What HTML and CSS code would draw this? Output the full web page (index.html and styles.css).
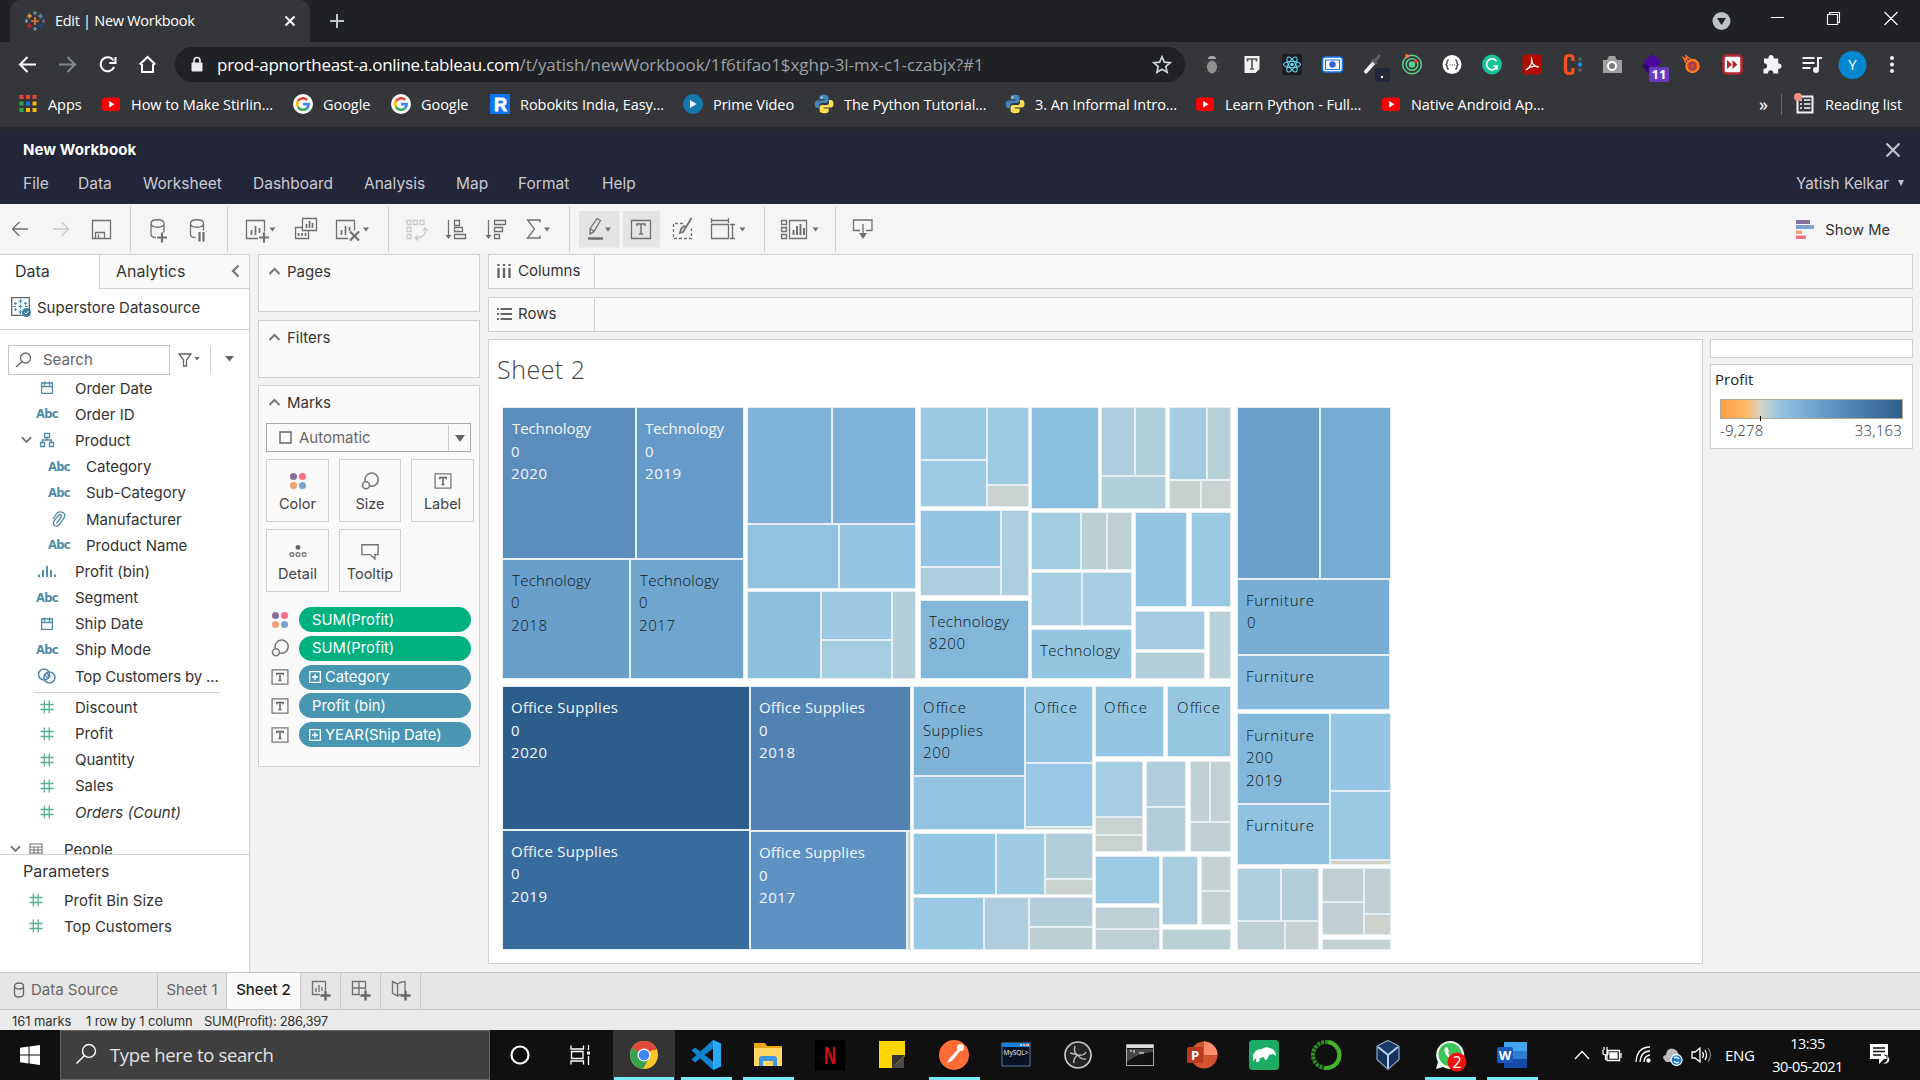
FILE: index.html
```html
<!DOCTYPE html>
<html lang="en">
<head>
<meta charset="utf-8">
<title>Edit | New Workbook</title>
<link rel="stylesheet" href="styles.css">
</head>
<body>
<svg class="defs" width="0" height="0">
  <symbol id="youtube" viewBox="0 0 20 20"><rect x="1" y="3.5" width="18" height="13.5" rx="3" fill="#f00"/><path d="M8 7l5.500 3.200L8 13.400z" fill="#fff"/></symbol>
  <symbol id="google" viewBox="0 0 20 20"><circle cx="10" cy="10" r="10" fill="#fff"/><g fill="none" stroke-width="2.600"><path d="M14.200 5.900A5.800 5.800 0 0 0 5 7.200" stroke="#ea4335"/><path d="M5 7.200a5.800 5.800 0 0 0 0 5.600" stroke="#fbbc05"/><path d="M5 12.800a5.800 5.800 0 0 0 8.800 1.600" stroke="#34a853"/><path d="M13.800 14.400A5.600 5.600 0 0 0 15.700 10.100H10" stroke="#4285f4"/></g></symbol>
  <symbol id="python" viewBox="0 0 20 20"><path d="M10 .8c-3.500 0-4.500 1-4.500 2.800v2h5v.9H3.400C1.600 6.500.7 8 .7 10.200s1 3.700 2.700 3.700h1.800v-2.300c0-1.700 1.200-2.700 2.900-2.700h4.200c1.400 0 2.300-1 2.300-2.300v-3C14.600 1.800 13 .8 10 .8z" fill="#4584b6"/><path d="M10.200 19.200c3.500 0 4.500-1 4.500-2.800v-2h-5v-.9h7.100c1.800 0 2.700-1.500 2.700-3.700s-1-3.700-2.700-3.700H15v2.300c0 1.700-1.200 2.700-2.900 2.700H7.900c-1.400 0-2.300 1-2.300 2.300v3c0 1.800 1.600 2.800 4.600 2.800z" fill="#ffde57"/><circle cx="7.600" cy="3.300" r=".9" fill="#fff"/></symbol>
  <symbol id="calendar" viewBox="0 0 20 16"><path d="M4.600 3h10.800v10.400H4.600zM4.600 6.500h10.800M7.500 1.500v4M12.500 1.500v4" fill="none" stroke="#4e8ba9" stroke-width="1.300"/></symbol>
  <symbol id="hash" viewBox="0 0 20 16"><path d="M7.300 1.500v13M12.200 1.500v13M3.500 5.500h13M3.500 10.500h13" fill="none" stroke="#55b08d" stroke-width="1.300"/></symbol>
  <symbol id="dots4" viewBox="0 0 20 20"><circle cx="5" cy="5" r="4" fill="#86709a"/><circle cx="15" cy="5" r="4" fill="#f76f82"/><circle cx="5" cy="15" r="4" fill="#f0a277"/><circle cx="15" cy="15" r="4" fill="#7ea2cb"/></symbol>
  <symbol id="sizeicon" viewBox="0 0 20 20"><g fill="none" stroke="#757575" stroke-width="1.700"><path d="M4.800 10.500A7.300 7.300 0 1 1 9.500 15.400"/><circle cx="5.500" cy="14.800" r="3.900"/></g></symbol>
  <symbol id="tbox" viewBox="0 0 20 20"><path d="M1.200 2.200h17.600v15.600H1.200z" fill="none" stroke="#757575" stroke-width="1.400"/><path d="M6.500 8V6.200h7V8M10 6.200v7.600M8.300 13.800h3.400" fill="none" stroke="#666" stroke-width="1.700"/></symbol>
  <symbol id="plusbox" viewBox="0 0 12 12"><path d="M.7.7h10.600v10.600H.7zM3 6h6M6 3v6" fill="none" stroke="#fff" stroke-width="1.300"/></symbol>
  <symbol id="up" viewBox="0 0 12 8"><path d="M1 7l5-5 5 5" fill="none" stroke="#757575" stroke-width="2"/></symbol>
  <symbol id="down" viewBox="0 0 12 8"><path d="M1 1l5 5 5-5" fill="none" stroke="#757575" stroke-width="2"/></symbol>
</svg>

<header class="chrome">
  <div class="tabstrip">
    <div class="tab">
      <svg width="20" height="20" viewBox="0 0 20 20" fill="none" stroke-width="1.700"><path d="M10 6v8M6 10h8" stroke="#e8762c"/><path d="M10 0v4M8 2h4M10 16v4M8 18h4" stroke="#5b879b"/><path d="M4.500 2.500v5M2 5h5" stroke="#eb912c"/><path d="M15.500 2.500v5M13 5h5" stroke="#59879b"/><path d="M4.500 12.500v5M2 15h5" stroke="#c72035"/><path d="M15.500 12.500v5M13 15h5" stroke="#1f447e"/><path d="M1.500 8v4M0 10h3" stroke="#7199a6"/><path d="M18.500 8v4M17 10h3" stroke="#5c6692"/></svg>
      <span class="tabtitle">Edit | New Workbook</span>
      <svg width="12" height="12" viewBox="0 0 12 12"><path d="M1.500 1.500l9 9M10.500 1.500l-9 9" stroke="#fff" stroke-width="2"/></svg>
    </div>
    <svg class="newtab" width="16" height="16" viewBox="0 0 16 16"><path d="M8 1v14M1 8h14" stroke="#c4c7ca" stroke-width="2"/></svg>
    <svg class="winbtns" width="210" height="42" viewBox="1710 0 210 42"><circle cx="1721.500" cy="21" r="9" fill="#bdc1c6"/><path d="M1717 18h9l-4.500 7z" fill="#202124"/><path d="M1771 17.500h13M1827.500 14.500h10v10h-10zM1829.500 14.500v-2h10v10h-2M1884.500 12l13 13M1897.500 12l-13 13" fill="none" stroke="#fff" stroke-width="1.100"/></svg>
  </div>
  <div class="navbar">
    <svg class="navicons" width="175" height="45" viewBox="0 42 175 45" fill="none" stroke="#fff" stroke-width="2"><path d="M36 64.500H21M27.500 57l-7.500 7.500 7.500 7.500"/><path d="M59 64.500h15M67.500 57l7.500 7.500-7.500 7.500" stroke="#84878a"/><path d="M113.500 60.500a7 7 0 1 0 .6 6.500M115.500 57v6h-6.200"/><path d="M139.700 64.500l7.800-7.500 7.800 7.500M142 64v8h11v-8"/></svg>
    <div class="omnibox">
      <svg width="14" height="18" viewBox="0 0 14 18"><rect x="1.500" y="6.500" width="11" height="9" rx="1" fill="#e8eaed"/><path d="M4 7V4.500a3 3 0 0 1 6 0V7" fill="none" stroke="#e8eaed" stroke-width="1.600"/></svg>
      <span class="url">prod-apnortheast-a.online.tableau.com<i>/t/yatish/newWorkbook/1f6tifao1$xghp-3l-mx-c1-czabjx?#1</i></span>
      <svg class="star" width="20" height="20" viewBox="0 0 20 20"><path d="M10 1.800l2.400 5.400 5.800.5-4.400 3.900 1.300 5.700-5.100-3-5.100 3 1.300-5.700L1.800 7.700l5.800-.5z" fill="none" stroke="#d0d3d6" stroke-width="1.700"/></svg>
    </div>
    <div class="exts">
      <svg viewBox="0 0 40 45"><ellipse cx="20" cy="25" rx="5" ry="6.500" fill="#909090"/><path d="M16 17a4 3 0 0 1 8 0z" fill="#aaa"/><path d="M13 20l2 1M27 20l-2 1M12.500 25h2M27.500 25h-2M13 30l2-1M27 30l-2-1" stroke="#5d5d5d"/></svg>
      <svg viewBox="0 0 40 45"><path d="M12.500 14h15v13l-4 4h-11z" fill="#f1f1f1"/><path d="M15.500 19.500V17h9v2.500M20 17v10M18 27h4" fill="none" stroke="#555" stroke-width="1.700"/></svg>
      <svg viewBox="0 0 40 45"><rect x="10" y="12" width="20" height="21" rx="2" fill="#1d1e20"/><g fill="none" stroke="#61dafb" stroke-width="1.100"><ellipse cx="20" cy="22.500" rx="8.500" ry="3.300"/><ellipse cx="20" cy="22.500" rx="8.500" ry="3.300" transform="rotate(60 20 22.500)"/><ellipse cx="20" cy="22.500" rx="8.500" ry="3.300" transform="rotate(120 20 22.500)"/></g><circle cx="20" cy="22.500" r="1.800" fill="#61dafb"/></svg>
      <svg viewBox="0 0 40 45"><rect x="10.500" y="15" width="20" height="15" rx="3" fill="#fff" stroke="#1a73e8" stroke-width="1.500"/><path d="M13.500 18h14v9.500h-14z" fill="none" stroke="#1a73e8" stroke-width="1.200"/><circle cx="20.500" cy="22.500" r="3.200" fill="#3d5bd9"/></svg>
      <svg viewBox="0 0 40 45"><path d="M14 29.500l8-9" stroke="#eee" stroke-width="3.800" stroke-linecap="round"/><path d="M22 20l6-7M20 17l5 5" stroke="#5c5c5c" stroke-width="3"/><rect x="23" y="26" width="15" height="14" rx="2" fill="#23273b"/><circle cx="30" cy="35" r="1.200" fill="#fff"/></svg>
      <svg viewBox="0 0 40 45"><g fill="none" stroke="#57d18d" stroke-width="1.500"><circle cx="20" cy="22.500" r="9.300"/><circle cx="20" cy="22.500" r="5.800"/></g><circle cx="20" cy="22.500" r="3.200" fill="#57d18d"/><circle cx="15" cy="14" r="2" fill="#ff6d3a"/><circle cx="24" cy="19" r="1.800" fill="#f33"/></svg>
      <svg viewBox="0 0 40 45"><circle cx="20" cy="22.500" r="9.500" fill="#fff"/><path d="M17 18q-2 0-2 2v1.500l-1 1 1 1V25q0 2 2 2M23 18q2 0 2 2v1.500l1 1-1 1V25q0 2-2 2M17.500 23h1M20 23h1M22 23h1" fill="none" stroke="#333" stroke-width="1.200"/></svg>
      <svg viewBox="0 0 40 45"><circle cx="20" cy="22.500" r="10" fill="#15c39a"/><path d="M24.500 19a5.500 5.500 0 1 0 .8 5h-4M25 27.500v-4" fill="none" stroke="#fff" stroke-width="1.700"/></svg>
      <svg viewBox="0 0 40 45"><rect x="10.500" y="12.500" width="19.500" height="20" rx="2.500" fill="#b30b00"/><path d="M14 28c5-4 7-8 5.600-11.500-1 3.500 2 8 7 8.500-3-1.500-8-.5-12.600 3z" fill="none" stroke="#fff" stroke-width="1.300"/></svg>
      <svg viewBox="0 0 40 45"><path d="M21 19v-2.500q0-3-3-3h-1q-3.500 0-3.500 3.500v11q0 3.500 3.500 3.500h1q3 0 3-3V26" fill="none" stroke="#f4511e" stroke-width="3.200"/><circle cx="28" cy="17" r="2" fill="#555b60"/><circle cx="28" cy="22.500" r="2.200" fill="#1e88e5"/><circle cx="28" cy="28" r="2" fill="#555b60"/></svg>
      <svg viewBox="0 0 40 45"><path d="M11 18h4l2-4h6l2 4h5v13H11z" fill="#a0a0a0"/><circle cx="20" cy="24" r="4" fill="#777" stroke="#fff" stroke-width="2"/></svg>
      <svg viewBox="0 0 40 45"><path d="M10 24l6-5 6 10-4 5z" fill="#2b0a70"/><path d="M20 12l10 8-9 7-10-7z" fill="#4b08a1"/><rect x="17" y="25" width="20" height="15" rx="2" fill="#6c3ac0"/><text x="27" y="37" class="badge">11</text></svg>
      <svg viewBox="0 0 40 45"><circle cx="20.500" cy="24" r="6.200" fill="#d64b1c" stroke="#ff8127" stroke-width="2"/><circle cx="20.500" cy="24" r="3" fill="none" stroke="#8b3f6b" stroke-width="1.500"/><path d="M14 21l-2.500-5 3.500 2-1-4 5 3.500" fill="none" stroke="#f37021" stroke-width="1.500"/></svg>
      <svg viewBox="0 0 40 45"><rect x="11.500" y="13.500" width="18" height="18" rx="3" fill="#fff" stroke="#b9272e" stroke-width="2.500"/><path d="M15 18l5 4.500-5 4.500zM20.500 18l5 4.500-5 4.500z" fill="#b9272e"/></svg>
      <svg viewBox="0 0 40 45"><path d="M12 16.500h4.500a2.700 2.700 0 1 1 5.200 0h4.500v5a2.700 2.700 0 1 1 0 5.200v4.800h-5a2.600 2.600 0 1 0-5 0h-4.700v-5a2.700 2.700 0 1 0 .5-5.200z" fill="#f1f3f4"/></svg>
      <svg viewBox="0 0 40 45"><path d="M10.500 16h12M10.500 21h12M10.500 26h8M26 27V16h4" fill="none" stroke="#f1f3f4" stroke-width="2"/><circle cx="24" cy="28" r="3" fill="#f1f3f4"/></svg>
      <svg viewBox="0 0 40 45"><circle cx="20.500" cy="23" r="14" fill="#0288d1"/><text x="20.500" y="28" class="avatar">Y</text></svg>
      <svg viewBox="0 0 40 45"><g fill="#f1f3f4"><circle cx="20" cy="16" r="2"/><circle cx="20" cy="22.500" r="2"/><circle cx="20" cy="29" r="2"/></g></svg>
    </div>
  </div>
  <div class="bookmarks">
    <span class="bm b1"><svg width="18" height="18" viewBox="0 0 18 18"><path d="M.5 0h4v4h-4zM7 0h4v4H7zM13.500 0h4v4h-4z" fill="#ea4335"/><path d="M.5 6.500h4v4h-4z" fill="#34a853"/><path d="M7 6.500h4v4H7z" fill="#1a73e8"/><path d="M13.500 6.500h4v4h-4zM7 13h4v4H7zM13.500 13h4v4h-4z" fill="#fbbc05"/><path d="M.5 13h4v4h-4z" fill="#34a853"/></svg>Apps</span>
    <span class="bm b2"><svg width="20" height="20"><use href="#youtube"/></svg>How to Make Stirlin...</span>
    <span class="bm b3"><svg width="20" height="20"><use href="#google"/></svg>Google</span>
    <span class="bm b4"><svg width="20" height="20"><use href="#google"/></svg>Google</span>
    <span class="bm b5"><svg width="20" height="20" viewBox="0 0 20 20"><path d="M0 0h20v20H0z" fill="#0d74f2"/><text x="10.500" y="16.500" class="robo">R</text></svg>Robokits India, Easy...</span>
    <span class="bm b6"><svg width="20" height="20" viewBox="0 0 20 20"><circle cx="10" cy="10" r="10" fill="#1278ad"/><path d="M7 6l6.500 4L7 14z" fill="#fff"/></svg>Prime Video</span>
    <span class="bm b7"><svg width="20" height="20"><use href="#python"/></svg>The Python Tutorial...</span>
    <span class="bm b8"><svg width="20" height="20"><use href="#python"/></svg>3. An Informal Intro...</span>
    <span class="bm b9"><svg width="20" height="20"><use href="#youtube"/></svg>Learn Python - Full...</span>
    <span class="bm b10"><svg width="20" height="20"><use href="#youtube"/></svg>Native Android Ap...</span>
    <span class="more">»</span>
    <span class="reading"><svg width="22" height="22" viewBox="0 0 22 22"><path d="M3.500 3.500h15v16h-15z" fill="none" stroke="#f1f3f4" stroke-width="2"/><path d="M6 7h2M6 11h2M6 15h2M10 7h6.500M10 11h6.500M10 15h6.500" stroke="#f1f3f4" stroke-width="1.600"/><circle cx="4" cy="4" r="4" fill="#f28b82"/></svg>Reading list</span>
  </div>
</header>

<div class="apphead">
  <div class="headrow"><b class="wbname">New Workbook</b><svg width="16" height="16" viewBox="0 0 16 16"><path d="M1.500 1.500l13 13M14.500 1.500l-13 13" stroke="#c1c2c8" stroke-width="2.200"/></svg></div>
  <nav class="menu"><span class="m1">File</span><span class="m2">Data</span><span class="m3">Worksheet</span><span class="m4">Dashboard</span><span class="m5">Analysis</span><span class="m6">Map</span><span class="m7">Format</span><span>Help</span><span class="user">Yatish Kelkar<svg width="8" height="6" viewBox="0 0 8 6"><path d="M1 0h6L4 6z" fill="#c5c7ce"/></svg></span></nav>
</div>

<div class="toolbar">
  <svg class="grp" width="131" height="46" viewBox="0 207 130 46"><path d="M28 230H13M19.500 223l-7 7 7 7"/><path d="M53 230h15M61.500 223l7 7-7 7" stroke="#cbcbcb"/><path d="M92.500 221.500h18v18h-18zM95.500 239v-5.500h9v5.500M98.500 239v-3.500"/></svg>
  <svg class="grp" width="97" height="46" viewBox="131 207 96 46"><path d="M151 224.500c0-5 13-5 13 0s-13 5-13 0v11c0 2 2 3 5 3M164 224.500v9M190.500 224.500c0-5 13-5 13 0s-13 5-13 0v11c0 2 2 3 5 3M203.500 224.500v7"/><path d="M157 238.500h10M162 233.500v10M199.500 233v9.500M203.500 233v9.500" stroke-width="2.200"/></svg>
  <svg class="grp" width="161" height="46" viewBox="228 207 160 46"><path d="M258 239.500h-11.500v-18h18v11M302.500 219.500h14v12h-14zM302 228.500h-6.500v11h13v-7.500M348 239.500h-11.500v-18h18v10"/><path d="M251.500 236v-5M255.500 236v-9M259.500 234v-5M306.500 229v-4M309.500 229v-7M312.500 229v-5M298.500 237v-3M302 237v-3M305.500 237v-3M341.500 236v-5M345.500 236v-9M349.500 232v-4" stroke-width="1.700"/><path d="M259 238.500h10M264 233.500v10M350 232.500l9 9M359 232.500l-9 9" stroke-width="2.200"/><path class="car" d="M269.500 228.500h6l-3 4zM363 228.500h6l-3 4z"/></svg>
  <svg class="grp" width="181" height="46" viewBox="389 207 180 46"><path d="M407 221.500h4v4h-4zM413.500 221.500h4v4h-4zM420 221.500h4v4h-4zM407 228.500h4v4h-4zM407 235.500h4v4h-4zM425 229q2 9-9 10M423 232l2-3 3 3M418 236l-3 3 3 2.500" stroke="#cbcbcb"/><path d="M448.500 221v17M454.500 221.500h5v5h-5zM454.500 228.500h8v4h-8zM454.500 235.500h11v4h-11zM488.500 221v17M494.500 221.500h11v4h-11zM494.500 228.500h8v4h-8zM494.500 235.500h5v4h-5zM540 223.500v-2.500h-12.500l7 9-7 9h12.500V236.500"/><path class="car" d="M445.500 236h6l-3 4zM485.500 236h6l-3 4zM544 228.500h6l-3 4z"/></svg>
  <svg class="grp" width="195" height="46" viewBox="570 207 194 46"><path d="M579 212h40.500v36.500H579zM623 212h37v36.500h-37z" fill="#e4e4e4" stroke="none"/><path d="M597 219.500l3.500 2-6.500 11-4 2.500v-5zM590 229.500l4 3M631.500 221.500h19v18h-19zM711.500 225.500h17v14h-17zM711 221.500h17M711.500 219v5M728.500 219v5M732.500 225v14M730 225.500h5M730 239.500h5"/><path d="M588 239.500h15" stroke-width="2.500"/><path d="M637 227v-2h8v2M641 225v10M639 235h4" stroke-width="1.500"/><path d="M683 224.500h-9.500v15h18v-10" stroke-dasharray="3 2"/><path d="M691.500 219l-6 10M686 228l-3 5-3 1 1-4 3-3z" stroke-width="1.800"/><path class="car" d="M605 228.500h6l-3 4zM739.500 228.500h6l-3 4z"/></svg>
  <svg class="grp" width="71" height="46" viewBox="765 207 70 46"><path d="M781.500 221.500h5v4h-5zM781.500 228.500h5v4h-5zM781.500 235.500h5v4h-5zM789.500 221.500h17v18h-17z"/><path d="M793.500 236v-5M797 236v-9M800.500 236v-11M804 236v-7" stroke-width="2"/><path class="car" d="M812.500 228.500h6l-3 4z"/></svg>
  <svg class="grp last" width="60" height="46" viewBox="836 207 60 46"><path d="M860 231.500h-6.500v-10.500h18.500v10.500h-6M863 225v11"/><path class="car" d="M859 234h8l-4 6z"/></svg>
  <div class="showme"><svg width="20" height="20" viewBox="0 0 20 20"><path d="M1 0h14v4H1z" fill="#86709a"/><path d="M1 5h18v4H1z" fill="#7ea2cb"/><path d="M1 10.500h6v3.500H1z" fill="#f0a277"/><path d="M1 15.500h10V19H1z" fill="#f76f82"/></svg>Show Me</div>
</div>

<main class="work">
  <aside class="data">
    <div class="ptabs"><span class="pt on">Data</span><span class="pt off"><span>Analytics</span><svg width="9" height="14" viewBox="0 0 9 14"><path d="M7.500 1.500L2 7l5.500 5.500" fill="none" stroke="#757575" stroke-width="2.200"/></svg></span></div>
    <div class="ds"><svg width="20" height="20" viewBox="0 0 20 20"><path d="M.7.700h17.600v17.600H.7z" fill="#fff" stroke="#666" stroke-width="1.300"/><path d="M9.500 2v4M7.500 4h4M9.500 7.500v4M7.500 9.500h4M9.500 13v4M7.500 15h4M4.500 5v3M3 6.500h3M14.500 5v3M13 6.500h3M4.500 11v3M3 12.500h3M2 9.500h3M14 9.500h3" stroke="#3d8fc6" stroke-width="1.200"/><circle cx="15.500" cy="15.500" r="4.500" fill="#3b7f9f"/><path d="M13.500 15.500l1.500 1.500 2.500-3" fill="none" stroke="#fff"/></svg>Superstore Datasource</div>
    <div class="searchrow"><div class="search"><svg width="17" height="16" viewBox="0 0 17 16"><circle cx="10.500" cy="6" r="5" fill="none" stroke="#666" stroke-width="1.300"/><path d="M7 9.500L1 15" stroke="#666" stroke-width="1.500"/></svg>Search</div>
      <svg width="70" height="28" viewBox="172 346 70 28"><path d="M179 355h12l-4.500 6v6h-3v-6z" fill="none" stroke="#666" stroke-width="1.300"/><path d="M194.500 358h5l-2.500 3.500zM225 357h9l-4.500 5.500z" fill="#666"/><path d="M210.500 347v27" stroke="#d0d0d0"/></svg></div>
    <div class="fields">
      <div class="f"><svg><use href="#calendar"/></svg>Order Date</div>
      <div class="f"><em>Abc</em>Order ID</div>
      <div class="f open"><svg class="chev"><use href="#down"/></svg><svg viewBox="0 0 20 16"><path d="M7.500 1.500h5v4h-5zM3.500 10.500h4v4h-4zM12.500 10.500h4v4h-4zM10 5.500v2.500M5.500 10.500V8h9v2.500" fill="none" stroke="#4e8ba9" stroke-width="1.300"/></svg>Product</div>
      <div class="f sub"><em>Abc</em>Category</div>
      <div class="f sub"><em>Abc</em>Sub-Category</div>
      <div class="f sub"><svg viewBox="0 0 20 16"><path d="M4 8l4-6q3-2 6-.500 3 2 1 5.500l-5 7q-2 2-4.500.500-2-1.500-.5-4.500l4.500-6q1.500-1 2.500 0t0 2.500l-4.500 6" fill="none" stroke="#4e8ba9" stroke-width="1.300"/></svg>Manufacturer</div>
      <div class="f sub"><em>Abc</em>Product Name</div>
      <div class="f"><svg viewBox="0 0 20 16"><path d="M2 14v-2.500M6 14V7M10 14V3M14 14V7M18 14v-2.500" stroke="#4e8ba9" stroke-width="1.900"/></svg>Profit (bin)</div>
      <div class="f"><em>Abc</em>Segment</div>
      <div class="f"><svg><use href="#calendar"/></svg>Ship Date</div>
      <div class="f"><em>Abc</em>Ship Mode</div>
      <div class="f long"><svg viewBox="0 0 20 16"><g fill="none" stroke="#4e8ba9" stroke-width="1.500"><circle cx="7" cy="6.500" r="5.500"/><circle cx="12.500" cy="9.500" r="5.500"/><path d="M7 6.500l5 4M9.500 4.500l4 5"/></g></svg>Top Customers by ...</div>
      <div class="fsep"></div>
      <div class="f"><svg><use href="#hash"/></svg>Discount</div>
      <div class="f"><svg><use href="#hash"/></svg>Profit</div>
      <div class="f"><svg><use href="#hash"/></svg>Quantity</div>
      <div class="f"><svg><use href="#hash"/></svg>Sales</div>
      <div class="f"><svg><use href="#hash"/></svg><i>Orders (Count)</i></div>
      <div class="f table"><svg class="chev"><use href="#down"/></svg><svg viewBox="0 0 20 16"><path d="M4 3h12v12H4zM4 6h12M4 9h12M4 12h12M8 6v9M12 6v9" fill="none" stroke="#757575" stroke-width="1.100"/></svg>People</div>
    </div>
    <div class="params"><h3>Parameters</h3>
      <div class="f p"><svg><use href="#hash"/></svg>Profit Bin Size</div>
      <div class="f p"><svg><use href="#hash"/></svg>Top Customers</div></div>
  </aside>

  <section class="cards">
    <div class="card pages"><h4><svg><use href="#up"/></svg>Pages</h4></div>
    <div class="card filters"><h4><svg><use href="#up"/></svg>Filters</h4></div>
    <div class="card marks"><h4><svg><use href="#up"/></svg>Marks</h4>
      <div class="select"><svg width="13" height="13" viewBox="0 0 13 13"><path d="M1 1h11v11H1z" fill="none" stroke="#666" stroke-width="1.400"/></svg><span>Automatic</span><svg class="arr" width="22" height="26" viewBox="0 0 22 26"><path d="M.5 0v26" stroke="#ccc"/><path d="M7 10h10l-5 7z" fill="#666"/></svg></div>
      <div class="btns">
        <div><svg><use href="#dots4"/></svg>Color</div>
        <div><svg><use href="#sizeicon"/></svg>Size</div>
        <div><svg><use href="#tbox"/></svg>Label</div>
        <div><svg viewBox="0 0 20 20"><circle cx="10" cy="6" r="2.700" fill="#666"/><g fill="none" stroke="#666" stroke-width="1.200"><circle cx="3.200" cy="14" r="2.200"/><circle cx="10" cy="14" r="2.200"/><circle cx="16.800" cy="14" r="2.200"/></g></svg>Detail</div>
        <div><svg viewBox="0 0 20 20"><path d="M1 3h18v11h-3.500v5l-5-5H1z" fill="none" stroke="#757575" stroke-width="1.500"/></svg>Tooltip</div>
      </div>
      <div class="pills">
        <div><svg><use href="#dots4"/></svg><span class="pill g">SUM(Profit)</span></div>
        <div><svg><use href="#sizeicon"/></svg><span class="pill g">SUM(Profit)</span></div>
        <div><svg><use href="#tbox"/></svg><span class="pill e"><svg><use href="#plusbox"/></svg>Category</span></div>
        <div><svg><use href="#tbox"/></svg><span class="pill">Profit (bin)</span></div>
        <div><svg><use href="#tbox"/></svg><span class="pill e"><svg><use href="#plusbox"/></svg>YEAR(Ship Date)</span></div>
      </div>
    </div>
  </section>

  <section class="sheet">
    <div class="shelf"><span><svg viewBox="0 0 16 16"><path d="M2.500 5v10M8 5v10M13.500 5v10M2.500 1v2M8 1v2M13.500 1v2" stroke="#666" stroke-width="2.400"/></svg>Columns</span></div>
    <div class="shelf"><span><svg viewBox="0 0 16 16"><path d="M4.500 3H16M4.500 8H16M4.500 13H16M1 3h2M1 8h2M1 13h2" stroke="#666" stroke-width="1.800"/></svg>Rows</span></div>
    <div class="viewrow">
      <div class="view">
        <h2>Sheet 2</h2>
        <svg class="treemap" width="893" height="548" viewBox="500 404 893 548">
          <g class="t">
            <rect x="503" y="408" width="132" height="150" fill="#5a8dbc"/><rect x="637" y="408" width="106" height="150" fill="#669ac8"/>
            <rect x="503" y="560" width="126" height="118" fill="#6a9fca"/><rect x="631" y="560" width="112" height="118" fill="#70a5ce"/>
            <rect x="748" y="408" width="83" height="115" fill="#80b3d9"/><rect x="833" y="408" width="82" height="115" fill="#80b3d9"/>
            <rect x="748" y="525" width="90" height="63" fill="#91c3e1"/><rect x="840" y="525" width="75" height="63" fill="#94c5e2"/>
            <rect x="748" y="592" width="72" height="86" fill="#8ec0de"/><rect x="822" y="592" width="69" height="47" fill="#9cc8e3"/><rect x="822" y="641" width="69" height="37" fill="#a5cde0"/><rect x="893" y="592" width="22" height="86" fill="#b4ced9"/>
            <rect x="921" y="408" width="65" height="51" fill="#9ac9e4"/><rect x="921" y="461" width="65" height="45" fill="#9dcbe4"/><rect x="988" y="408" width="40" height="76" fill="#9ccae3"/><rect x="988" y="486" width="40" height="20" fill="#c9d2d0"/>
            <rect x="921" y="511" width="79" height="55" fill="#94c5e2"/><rect x="921" y="568" width="79" height="27" fill="#accede"/><rect x="1002" y="511" width="26" height="84" fill="#accede"/>
            <rect x="921" y="601" width="107" height="77" fill="#83b7da"/>
            <rect x="1032" y="408" width="66" height="100" fill="#8bbfdf"/><rect x="1102" y="408" width="32" height="67" fill="#adcdde"/><rect x="1136" y="408" width="29" height="67" fill="#b0ceda"/><rect x="1102" y="477" width="63" height="31" fill="#b1cfda"/>
            <rect x="1170" y="408" width="36" height="71" fill="#a4cce1"/><rect x="1208" y="408" width="22" height="71" fill="#b7cfd7"/><rect x="1170" y="481" width="30" height="27" fill="#c9d1cf"/><rect x="1202" y="481" width="28" height="27" fill="#cad2cf"/>
            <rect x="1032" y="513" width="48" height="56" fill="#a1cde0"/><rect x="1082" y="513" width="24" height="56" fill="#bbd0d4"/><rect x="1108" y="513" width="23" height="56" fill="#bed1d5"/>
            <rect x="1032" y="573" width="49" height="52" fill="#a4cde0"/><rect x="1083" y="573" width="48" height="52" fill="#a6cde0"/><rect x="1032" y="630" width="99" height="48" fill="#94c5e1"/>
            <rect x="1136" y="513" width="50" height="93" fill="#94c5e2"/><rect x="1192" y="513" width="38" height="93" fill="#99c8e3"/>
            <rect x="1136" y="612" width="68" height="37" fill="#a3cce2"/><rect x="1136" y="653" width="68" height="25" fill="#b3cfd9"/><rect x="1210" y="612" width="20" height="66" fill="#b8d0d7"/>
            <rect x="1238" y="408" width="81" height="170" fill="#6ca1cc"/><rect x="1321" y="408" width="69" height="170" fill="#75aad2"/><rect x="1238" y="580" width="151" height="74" fill="#78add4"/><rect x="1238" y="656" width="151" height="53" fill="#86b9db"/>
            <rect x="503" y="687" width="246" height="142" fill="#2c5d8b"/><rect x="751" y="687" width="159" height="143" fill="#5182b2"/><rect x="503" y="831" width="246" height="118" fill="#396c9e"/><rect x="751" y="832" width="155" height="117" fill="#5e92c2"/><rect x="908" y="832" width="2" height="117" fill="#d2d2c9"/>
            <rect x="914" y="687" width="110" height="88" fill="#7fb3d8"/><rect x="914" y="777" width="110" height="52" fill="#92c4e2"/><rect x="1026" y="687" width="66" height="75" fill="#93c5e2"/><rect x="1026" y="764" width="66" height="62" fill="#99c7e6"/><rect x="1026" y="828" width="66" height="1" fill="#cfd2cc"/>
            <rect x="914" y="834" width="81" height="60" fill="#94c5e2"/><rect x="997" y="834" width="47" height="60" fill="#9ecbe3"/><rect x="1046" y="834" width="46" height="44" fill="#b2ced9"/><rect x="1046" y="880" width="46" height="14" fill="#cad2ce"/>
            <rect x="914" y="898" width="69" height="51" fill="#9ac9e3"/><rect x="985" y="898" width="43" height="51" fill="#adcdde"/><rect x="1030" y="898" width="62" height="28" fill="#b4cdda"/><rect x="1030" y="928" width="62" height="21" fill="#bcd0d4"/>
            <rect x="1096" y="687" width="67" height="69" fill="#94c5e2"/><rect x="1168" y="687" width="62" height="69" fill="#95c6e2"/>
            <rect x="1096" y="762" width="46" height="54" fill="#a4cddf"/><rect x="1096" y="818" width="46" height="16" fill="#c8d2cf"/><rect x="1096" y="836" width="46" height="15" fill="#cad2ce"/>
            <rect x="1147" y="762" width="38" height="44" fill="#b2cddb"/><rect x="1147" y="808" width="38" height="43" fill="#b4cdda"/><rect x="1191" y="762" width="18" height="59" fill="#c0d1d3"/><rect x="1211" y="762" width="19" height="59" fill="#c2d1d2"/><rect x="1191" y="823" width="39" height="28" fill="#bfd1d3"/>
            <rect x="1096" y="857" width="63" height="46" fill="#9ccae3"/><rect x="1096" y="908" width="63" height="20" fill="#bdd0d7"/><rect x="1096" y="930" width="63" height="19" fill="#bdd0d4"/><rect x="1163" y="857" width="34" height="67" fill="#a8cddf"/><rect x="1202" y="857" width="28" height="33" fill="#c4d2d2"/><rect x="1202" y="892" width="28" height="32" fill="#c4d2d2"/><rect x="1163" y="930" width="67" height="19" fill="#b9d0d5"/>
            <rect x="1238" y="714" width="91" height="89" fill="#84b8da"/><rect x="1238" y="805" width="91" height="59" fill="#91c1e0"/><rect x="1331" y="714" width="59" height="76" fill="#94c6e3"/><rect x="1331" y="792" width="59" height="67" fill="#99c9e4"/><rect x="1331" y="861" width="59" height="3" fill="#d2d2c8"/>
            <rect x="1238" y="869" width="42" height="51" fill="#adcedb"/><rect x="1282" y="869" width="36" height="51" fill="#b2cfd9"/><rect x="1238" y="922" width="46" height="27" fill="#bdd0d5"/><rect x="1286" y="922" width="32" height="27" fill="#c6d1d1"/>
            <rect x="1323" y="869" width="40" height="32" fill="#bfd0d3"/><rect x="1323" y="903" width="40" height="31" fill="#bfd1d4"/><rect x="1365" y="869" width="25" height="44" fill="#c0d1d5"/><rect x="1365" y="915" width="25" height="19" fill="#cdd2cd"/><rect x="1323" y="940" width="67" height="9" fill="#c4d2d2"/>
          </g>
          <g class="lt">
            <text x="512" y="434" textLength="79">Technology</text><text x="511" y="457">0</text><text x="511" y="479" textLength="36">2020</text>
            <text x="645" y="434" textLength="79">Technology</text><text x="645" y="457">0</text><text x="645" y="479" textLength="36">2019</text>
            <text x="511" y="713" textLength="107">Office Supplies</text><text x="511" y="736">0</text><text x="511" y="758" textLength="36">2020</text>
            <text x="759" y="713" textLength="106">Office Supplies</text><text x="759" y="736">0</text><text x="759" y="758" textLength="36">2018</text>
            <text x="511" y="857" textLength="107">Office Supplies</text><text x="511" y="879">0</text><text x="511" y="902" textLength="36">2019</text>
            <text x="759" y="858" textLength="106">Office Supplies</text><text x="759" y="881">0</text><text x="759" y="903" textLength="36">2017</text>
          </g>
          <g class="dk">
            <text x="512" y="586" textLength="79">Technology</text><text x="511" y="608">0</text><text x="511" y="631" textLength="36">2018</text>
            <text x="640" y="586" textLength="79">Technology</text><text x="639" y="608">0</text><text x="639" y="631" textLength="36">2017</text>
            <text x="929" y="627" textLength="80">Technology</text><text x="929" y="649" textLength="36">8200</text>
            <text x="1040" y="656" textLength="80">Technology</text>
            <text x="1246" y="606" textLength="68">Furniture</text><text x="1247" y="628">0</text><text x="1246" y="682" textLength="68">Furniture</text>
            <text x="923" y="713" textLength="43">Office</text><text x="923" y="736" textLength="60">Supplies</text><text x="923" y="758" textLength="27">200</text>
            <text x="1034" y="713" textLength="43">Office</text><text x="1104" y="713" textLength="43">Office</text><text x="1177" y="713" textLength="43">Office</text>
            <text x="1246" y="741" textLength="68">Furniture</text><text x="1246" y="763" textLength="27">200</text><text x="1246" y="786" textLength="36">2019</text>
            <text x="1246" y="831" textLength="68">Furniture</text>
          </g>
        </svg>
      </div>
      <div class="legends"><div class="lbox empty"></div><div class="lbox"><div class="ltitle">Profit</div><div class="ramp"><b></b></div><div class="lnum"><span>-9,278</span><span>33,163</span></div></div></div>
    </div>
  </section>
</main>

<div class="sheettabs">
  <span class="st s0"><svg width="12" height="16" viewBox="0 0 12 16"><path d="M1.500 4c0-4 9-4 9 0s-9 4-9 0v8c0 4 9 4 9 0V4" fill="none" stroke="#666" stroke-width="1.300"/></svg>Data Source</span><span class="st s1">Sheet 1</span><span class="st s2">Sheet 2</span>
  <span class="st ic"><svg viewBox="0 0 20 20"><path d="M9 14.500H1.500v-13h13V10M5 12V8M8 12V5M11 11V7" fill="none" stroke="#757575" stroke-width="1.400"/><path d="M9.500 15.500h10M14.500 10.500v10" stroke="#666" stroke-width="2.400"/></svg></span>
  <span class="st ic"><svg viewBox="0 0 20 20"><path d="M9 14.500H1.500v-13h13V10M1.500 8h13M8 1.500v13" fill="none" stroke="#757575" stroke-width="1.400"/><path d="M9.500 15.500h10M14.500 10.500v10" stroke="#666" stroke-width="2.400"/></svg></span>
  <span class="st ic"><svg viewBox="0 0 20 20"><path d="M1.500 1.500l5 2.500v12l-5-3zM6.500 4l2.500-1.500 5-1v9M6.500 16l3-2" fill="none" stroke="#757575" stroke-width="1.400"/><path d="M9.500 15.500h10M14.500 10.500v10" stroke="#666" stroke-width="2.400"/></svg></span>
</div>
<div class="status"><span class="n1">161 marks</span><span class="n2">1 row by 1 column</span><span class="n3">SUM(Profit): 286,397</span></div>

<footer class="taskbar">
  <div class="start"><svg width="20" height="20" viewBox="0 0 20 20"><path d="M0 2.800l8.500-1.200v8H0zM9.500 1.500L20 0v9.600H9.500zM0 10.500h8.500v8L0 17.300zM9.500 10.500H20V20L9.500 18.600z" fill="#fff"/></svg></div>
  <div class="tsearch"><svg width="22" height="22" viewBox="0 0 22 22"><circle cx="14" cy="8" r="6.500" fill="none" stroke="#fff" stroke-width="1.400"/><path d="M9.500 12.500L1.500 20.500" stroke="#fff" stroke-width="1.400"/></svg>Type here to search</div>
  <div class="apps">
    <span><svg viewBox="0 0 40 40"><circle cx="20" cy="20" r="8.500" fill="none" stroke="#fff" stroke-width="2.200"/></svg></span>
    <span><svg viewBox="0 0 40 40"><path d="M9 10.500v3.500h12.500v-3.500M9 29.500V26h12.500v3.500M9.500 16.500h11.500v7H9.500zM26.500 10v5M26.500 21v9" fill="none" stroke="#fff" stroke-width="1.300"/><path d="M25 16.500h3v3h-3z" fill="#fff"/></svg></span>
    <span class="act run"><svg viewBox="0 0 40 40"><circle cx="20" cy="20" r="14" fill="#f9c62b"/><path d="M20 20L7.900 13A14 14 0 0 1 32.200 13z" fill="#df4a3c"/><path d="M7.900 13A14 14 0 0 0 19 34l6-11-5-3z" fill="#37a355"/><path d="M8 13h24v2H20z" fill="#df4a3c"/><circle cx="20" cy="20" r="6.500" fill="#fff"/><circle cx="20" cy="20" r="5.300" fill="#4285f4"/></svg></span>
    <span class="run"><svg viewBox="0 0 40 40"><path d="M27 5l8 3.500v23L27 35 5.500 15.500 9 12.500l18 14v-13l-18 14-3.500-3z" fill="#0f83cd"/><path d="M27 5l8 3.500v23L27 35z" fill="#29a9f2"/></svg></span>
    <span class="run"><svg viewBox="0 0 40 40"><path d="M6 8h11l2 3h15v20H6z" fill="#e9a713"/><path d="M6 13h28v18H6z" fill="#ffd769"/><path d="M11 31v-7q0-3 3-3h12q3 0 3 3v7h-4v-5H15v5z" fill="#3c97e0"/></svg></span>
    <span><svg viewBox="0 0 40 40"><path d="M5 5h30v30H5z" fill="#000"/><text x="20" y="29" textLength="12" lengthAdjust="spacingAndGlyphs" class="nf">N</text></svg></span>
    <span><svg viewBox="0 0 40 40"><path d="M7 6h26v15l-13 12H7z" fill="#ffd500"/><path d="M20 33V20h13z" fill="#333"/><path d="M21 33l11-12v12z" fill="#494949"/></svg></span>
    <span class="run"><svg viewBox="0 0 40 40"><circle cx="20" cy="20" r="15" fill="#ff6c37"/><path d="M24 14l-8 9-3 5 5-2 8-10z" fill="#fff"/><circle cx="26.500" cy="12.500" r="3.500" fill="#fff"/></svg></span>
    <span><svg viewBox="0 0 40 40"><rect x="6" y="8" width="28" height="23" fill="#071323" stroke="#597aa4"/><path d="M6 8h28v4H6z" fill="#1684df"/><path d="M24 9h2v2h-2zM27 9h2v2h-2zM30 9h3v2h-3z" fill="#e9b9a2"/><text x="20" y="20" class="mys">MySQL&gt;</text></svg></span>
    <span><svg viewBox="0 0 40 40"><circle cx="20" cy="20" r="13" fill="#252525" stroke="#c9c9c9" stroke-width="1.700"/><path d="M17 11q-2 7 3 9 6 1 8-3M20 20q-5 3-4 8M20 20q3 5 8 4M20 20l-8-2" fill="none" stroke="#bbb" stroke-width="1.400"/></svg></span>
    <span><svg viewBox="0 0 40 40"><path d="M6.500 9.500h27v21h-27z" fill="#111" stroke="#aaa"/><path d="M7 10h26v3H7z" fill="#ddd"/><path d="M7 14h26v3q-15 1-25 9H7z" fill="#474747"/><path d="M10 16h2M14 15v3M19 18h5" stroke="#fff"/></svg></span>
    <span><svg viewBox="0 0 40 40"><circle cx="22" cy="20" r="13.500" fill="#d35230"/><path d="M22 6.500A13.500 13.500 0 0 1 35.500 20H22z" fill="#ff8f6b"/><rect x="5" y="12" width="16" height="16" rx="1.500" fill="#b7391f"/><text x="13" y="25" class="ltr">P</text></svg></span>
    <span><svg viewBox="0 0 40 40"><rect x="5" y="5" width="30" height="30" rx="4" fill="#1cac65"/><path d="M9 26q-1-12 9-12 3-3 8-1 6 2 6 8l-3-2-4 1q-1 5-4 5l-1-3-4 1-1 4h-3v-4z" fill="#fff"/></svg></span>
    <span><svg viewBox="0 0 40 40"><circle cx="20" cy="20" r="13" fill="none" stroke="#2e8d22" stroke-width="4" stroke-dasharray="3 1"/><path d="M19 33A13 13 0 0 0 22 7" fill="none" stroke="#44b02c" stroke-width="4"/></svg></span>
    <span><svg viewBox="0 0 40 40"><path d="M20 5.500l11 5.500v13.500L20 34.500 9 24.500V11z" fill="#16305c" stroke="#8fa9c6" stroke-width="1.200"/><path d="M20 7.500l9 4.500-9 6.500-9-6.500z" fill="#1c3a68"/><path d="M10 12l10 8 10-8M20 20v13" fill="none" stroke="#b9d4ee" stroke-width="2"/></svg></span>
    <span class="run"><svg viewBox="0 0 40 40"><path d="M20 6a14 14 0 1 1-7 26l-7 2 2-7A14 14 0 0 1 20 6z" fill="#e9f5ea"/><circle cx="20" cy="19.500" r="11.500" fill="#3ec558"/><path d="M15 13q-2 4 3 9t8 4l1-3-4-2-2 1-3-4 1-2-2-4z" fill="#fff"/><circle cx="27" cy="27" r="9.500" fill="#f01010"/><text x="27" y="33" class="two">2</text></svg></span>
    <span class="run"><svg viewBox="0 0 40 40"><path d="M12 7h23v9H12z" fill="#41a5ee"/><path d="M12 16h23v8H12z" fill="#2b7cd3"/><path d="M12 24h23v9H12z" fill="#144aa5"/><rect x="5" y="12" width="16" height="16" rx="1.500" fill="#185abd"/><text x="13" y="25" class="ltr">W</text></svg></span>
  </div>
  <div class="tray"><svg width="146" height="50" viewBox="1570 1030 146 50" fill="none" stroke="#fff" stroke-width="1.300"><path d="M1575 1059l7-7.500 7 7.500"/><path d="M1607 1050.500h12.500v10H1607zM1621 1053v5M1603 1050v4q3 2 5 0v-4M1604 1047v3M1607 1047v3M1605.500 1055v5"/><path d="M1610 1053h7v5h-7z" fill="#fff"/><path d="M1636 1062q1-15 14-15M1640 1062q1-11 10-11M1644 1062q0-6 6-7"/><circle cx="1648.500" cy="1060.500" r="1.500" fill="#fff"/><path d="M1666 1062q-6-6 0-7 1-8 8-6 5 2 4 7 4 1 3 6z" fill="#bbb" stroke="none"/><circle cx="1676.500" cy="1060" r="5.500" fill="#1979ca" stroke="#fff"/><path d="M1674 1058q3-2 5 1M1679 1062q-3 2-5-1"/><path d="M1692 1052h3l5-4v14l-5-4h-3zM1702.500 1052q2 3 0 6M1705 1050q3 5 0 10"/><path d="M1708 1048q5 7 0 14" stroke="#777"/></svg><span class="eng">ENG</span><span class="clock"><span>13:35</span><span>30-05-2021</span></span><svg class="note" width="22" height="24" viewBox="0 0 22 24"><path d="M1 1h18v15h-4l-5 5v-5H1z" fill="#fff"/><path d="M4 5h12M4 8.500h12M4 12h8" stroke="#111" stroke-width="1.500"/><path d="M15.500 12q4 1 2 6-1 2-4 2 4 3 7-2 1-5-5-6z" fill="#fff" stroke="#111" stroke-width=".8"/></svg></div>
</footer>
</body>
</html>
```
FILE: styles.css
```css
* { box-sizing: border-box; }
body { margin: 0; width: 1920px; height: 1080px; overflow: hidden; display: flex; flex-direction: column; background: #f2f2f2; font-family: Inter, "Liberation Sans", sans-serif; font-size: 15px; color: #333; }
svg { display: block; flex: none; }
.defs { position: absolute; }
h2, h3, h4 { margin: 0; font-weight: 400; }

/* browser window */
.chrome { height: 129px; flex: none; background: #35363a; border-bottom: 2px solid #28292d; font-family: "Open Sans", "Noto Sans", sans-serif; color: #fff; }
.tabstrip { height: 42px; background: #202124; display: flex; align-items: center; }
.tab { width: 300px; height: 42px; margin-left: 10px; padding: 0 14px 0 15px; background: #35363a; border-radius: 10px 10px 0 0; display: flex; align-items: center; }
.tabtitle { flex: 1; margin-left: 10px; padding-bottom: 2px; font-size: 14.500px; letter-spacing: -.28px; }
.newtab { margin-left: 19px; }
.winbtns { margin-left: auto; }
.navbar { height: 45px; display: flex; align-items: center; }
.omnibox { width: 1010px; height: 35px; border-radius: 18px; background: #202124; display: flex; align-items: center; padding: 0 13px 0 15px; }
.url { flex: 1; margin-left: 13px; font-size: 17px; letter-spacing: -.25px; white-space: nowrap; }
.url i { font-style: normal; color: #9aa0a6; letter-spacing: -.06px; }
.exts { display: flex; margin-left: 7px; }
.exts svg { width: 40px; height: 45px; }
.badge { font: bold 13px "Open Sans", sans-serif; fill: #fff; text-anchor: middle; }
.avatar { font: 15px "Open Sans", sans-serif; fill: #fff; text-anchor: middle; }
.robo { font: 900 18px "Liberation Sans", sans-serif; fill: #fff; stroke: #fff; stroke-width: .8; text-anchor: middle; }
.bookmarks { height: 36px; display: flex; align-items: center; padding: 0 0 2px 19px; font-size: 14.500px; letter-spacing: -.05px; }
.bm { display: flex; align-items: center; white-space: nowrap; flex: none; }
.bm svg { margin-right: 10px; }
.b1 { width: 82px; }
.b1 svg { margin-right: 11px; }
.b2 { width: 192px; }
.b3 { width: 98px; }
.b4 { width: 99px; }
.b5 { width: 193px; }
.b6 { width: 131px; }
.b7 { width: 191px; }
.b8 { width: 190px; }
.b9 { width: 186px; }
.more { margin-left: auto; font-size: 18px; margin-right: 13px; }
.reading { display: flex; align-items: center; gap: 9px; border-left: 1px solid #6a6b6e; padding: 0 18px 0 12px; height: 21px; white-space: nowrap; }

/* workbook header */
.apphead { height: 75px; flex: none; background: #232638; color: #c9cad0; padding: 9px 19px 0 23px; }
.headrow { display: flex; justify-content: space-between; align-items: center; height: 24px; color: #fff; }
.wbname { font-size: 15px; font-weight: 700; letter-spacing: .1px; padding-bottom: 2px; }
.menu { display: flex; height: 42px; align-items: center; font-size: 15.500px; }
.m1 { width: 55px; }
.m2 { width: 65px; }
.m3 { width: 110px; }
.m4 { width: 111px; }
.m5 { width: 92px; }
.m6 { width: 62px; }
.m7 { width: 84px; }
.user { margin-left: auto; margin-right: -4px; display: flex; align-items: center; gap: 8px; font-size: 15.300px; }
.toolbar { height: 50px; flex: none; background: #f5f5f5; display: flex; align-items: center; }
.grp { border-right: 1px solid #d0d0d0; fill: none; stroke: #707070; stroke-width: 1.300; }
.last { border: 0; }
.car { fill: #707070; stroke: none; }
.showme { margin-left: auto; margin-right: 30px; display: flex; align-items: center; gap: 10px; padding-top: 1px; font-size: 14.700px; }

/* work area */
.work { height: 718px; flex: none; display: flex; }
.data { width: 250px; height: 718px; flex: none; background: #fff; border-right: 1px solid #d0d0d0; border-top: 1px solid #d0d0d0; display: flex; flex-direction: column; }
.ptabs { display: flex; height: 34px; flex: none; font-size: 16px; }
.pt { display: flex; align-items: center; padding-bottom: 2px; }
.on { width: 99px; padding-left: 15px; }
.off { flex: 1; justify-content: space-between; background: #fafafa; border-left: 1px solid #d0d0d0; border-bottom: 1px solid #d0d0d0; padding: 0 9px 1px 16px; }
.ds { height: 41px; flex: none; display: flex; align-items: center; gap: 6px; padding: 0 0 4px 11px; border-bottom: 1px solid #d0d0d0; }
.searchrow { height: 46px; flex: none; display: flex; padding: 15px 0 0 8px; }
.search { width: 162px; height: 30px; border: 1px solid #c4c4c4; display: flex; align-items: center; padding-left: 6px; gap: 11px; color: #666; margin-right: 2px; padding-bottom: 1px; }
.fields { height: 478px; flex: none; overflow: hidden; }
.f { height: 26.200px; display: flex; align-items: center; padding: 0 0 2px 37px; white-space: nowrap; }
.f svg { width: 20px; height: 16px; margin-right: 18px; overflow: visible; }
.f em { width: 20px; margin-right: 18px; font: 700 11.500px "DejaVu Sans", sans-serif; letter-spacing: -.6px; color: #4e8ba9; display: flex; justify-content: center; }
.f svg.chev { width: 11px; height: 8px; margin-right: 5px; }
.open { padding-left: 21px; }
.sub { padding-left: 49px; }
.f.sub svg, .f.sub em { margin-right: 17px; }
.long { letter-spacing: -.15px; }
.fsep { height: 1px; background: #d0d0d0; margin: 2px 29px 2px 34px; }
.table { margin-top: 10px; padding: 0 0 0 10px; }
.f.table svg + svg { margin-right: 18px; }
.params { border-top: 1px solid #d0d0d0; flex: 1; }
.params h3 { font-size: 16px; padding: 6px 0 7px 23px; line-height: 20px; }
.p { padding-left: 26px; }
.f.p svg { margin-right: 18px; }
.cards { width: 222px; flex: none; margin-left: 8px; }
.card { background: #fafafa; border: 1px solid #d0d0d0; height: 58px; margin-bottom: 8px; }
.filters { margin-bottom: 7px; }
.card h4 { height: 32px; display: flex; align-items: center; gap: 6px; padding-left: 9px; font-size: 15px; }
.card h4 svg { width: 13px; height: 8px; }
.marks { height: 382px; }
.select { margin: 5px 8px 7px 7px; height: 29px; border: 1px solid #a8a8a8; display: flex; align-items: center; gap: 7px; padding-left: 12px; color: #666; }
.arr { margin-left: auto; }
.btns { display: grid; grid-template-columns: 63px 62px 63px; column-gap: 10px; row-gap: 7px; padding-left: 7px; }
.btns div { height: 63px; border: 1px solid #d0d0d0; display: flex; flex-direction: column; align-items: center; padding-top: 12px; gap: 5px; font-size: 14.500px; line-height: 17px; color: #444; }
.btns svg { width: 18px; height: 18px; }
.pills { padding: 15px 8px 0 12px; display: flex; flex-direction: column; gap: 3.800px; }
.pills div { display: flex; align-items: center; justify-content: space-between; }
.pills svg { width: 18px; height: 18px; }
.pill { width: 172px; height: 25px; border-radius: 13px; background: #4996b2; color: #fff; display: flex; align-items: center; padding-left: 13px; font-size: 14.800px; }
.g { background: #00b180; }
.e { padding-left: 10px; gap: 4px; }
.pill svg { width: 12px; height: 12px; }
.sheet { width: 1425px; margin-left: 8px; display: flex; flex-direction: column; }
.shelf { height: 35px; margin-bottom: 8px; border: 1px solid #d0d0d0; background: #fafafa; flex: none; }
.shelf span { width: 106px; height: 33px; border-right: 1px solid #d0d0d0; display: flex; align-items: center; gap: 6px; padding: 0 0 2px 7px; }
.shelf svg { width: 16px; height: 16px; }
.viewrow { display: flex; gap: 7px; margin-top: -1px; }
.view { width: 1215px; height: 625px; background: #fff; border: 1px solid #d0d0d0; }
.view h2 { font: 300 25px "Open Sans", sans-serif; letter-spacing: .5px; color: #444; height: 63px; padding: 12px 0 0 8px; }
.treemap { margin: 1px 0 0 11px; }
.t { stroke: #e6eff5; stroke-width: 2; paint-order: stroke; }
.lt, .dk { font: 15px "Open Sans", sans-serif; fill: #f3f6f9; }
.dk { fill: #0b1a24; font-weight: 300; }
.legends { width: 203px; }
.lbox { border: 1px solid #d0d0d0; background: #fff; height: 85px; padding: 3px 9px 0 4px; font-family: "Open Sans", sans-serif; }
.empty { height: 19px; margin-bottom: 6px; }
.ltitle { height: 31px; line-height: 22px; color: #222; }
.ramp { height: 20px; margin-left: 5px; border: 1px solid #b0a898; background: linear-gradient(90deg, #fc9d43 0, #ffba66 14%, #d5d3c8 22%, #93c5e2 33%, #6a9dca 55%, #2c5d8b 100%); padding: 16px 0 0 39px; }
.ramp b { display: block; width: 1px; height: 5px; background: #000; }
.lnum { margin: 0 1px 0 5px; display: flex; justify-content: space-between; color: #333; font-weight: 300; letter-spacing: .2px; line-height: 22px; }

/* sheet tabs and status line */
.sheettabs { height: 38px; flex: none; border-top: 1px solid #c8c8c8; border-bottom: 1px solid #c8c8c8; background: #e6e6e6; display: flex; }
.st { border-right: 1px solid #c8c8c8; display: flex; align-items: center; justify-content: center; font-size: 15px; color: #666; padding-bottom: 3px; }
.s0 { width: 158px; gap: 6px; justify-content: flex-start; padding-left: 13px; }
.s1 { width: 69px; }
.s2 { width: 74px; background: #fafafa; color: #222; font-weight: 500; }
.ic { width: 40px; }
.ic svg { width: 20px; height: 20px; overflow: visible; }
.status { height: 20px; flex: none; background: #eaeaea; display: flex; align-items: center; padding: 2px 0 0 12px; font-size: 13px; letter-spacing: -.1px; white-space: nowrap; }
.n1 { width: 74px; }
.n2 { width: 118px; }
.n3 { letter-spacing: -.3px; }

/* taskbar */
.taskbar { height: 50px; flex: none; background: #101010; display: flex; color: #fff; font-family: "Open Sans", sans-serif; }
.start { width: 60px; display: flex; align-items: center; justify-content: center; }
.tsearch { width: 430px; background: #3f3f3f; border: 1px solid #666; display: flex; align-items: center; gap: 13px; padding: 0 0 2px 14px; font-size: 18.500px; letter-spacing: -.35px; color: #e2e2e2; }
.apps { display: flex; margin-left: -1px; }
.apps span { width: 62px; height: 50px; display: flex; align-items: center; justify-content: center; border-bottom: 3px solid transparent; padding-top: 3px; background-clip: border-box; }
.apps svg { width: 40px; height: 40px; }
.apps .act { background: #343434; }
.apps .run { background-image: linear-gradient(#76e8ff, #76e8ff); background-size: 51px 3px; background-position: center bottom; background-origin: border-box; background-repeat: no-repeat; }
.apps .act.run { background-size: 60px 3px; }
.mys { font: 6.500px "Open Sans", sans-serif; fill: #fff; text-anchor: middle; }
.nf { font: bold 24px "Liberation Sans", sans-serif; fill: #d30d17; text-anchor: middle; }
.ltr { font: bold 13px "Open Sans", sans-serif; fill: #fff; text-anchor: middle; }
.two { font: 16px "Open Sans", sans-serif; fill: #fff; text-anchor: middle; }
.tray { margin-left: auto; width: 350px; display: flex; align-items: center; }
.eng { width: 54px; padding-left: 9px; font-size: 15px; letter-spacing: -.3px; }
.clock { width: 75px; display: flex; flex-direction: column; align-items: center; font-size: 14.500px; line-height: 23px; letter-spacing: -.5px; white-space: nowrap; }
.note { margin-left: 24px; }
```
